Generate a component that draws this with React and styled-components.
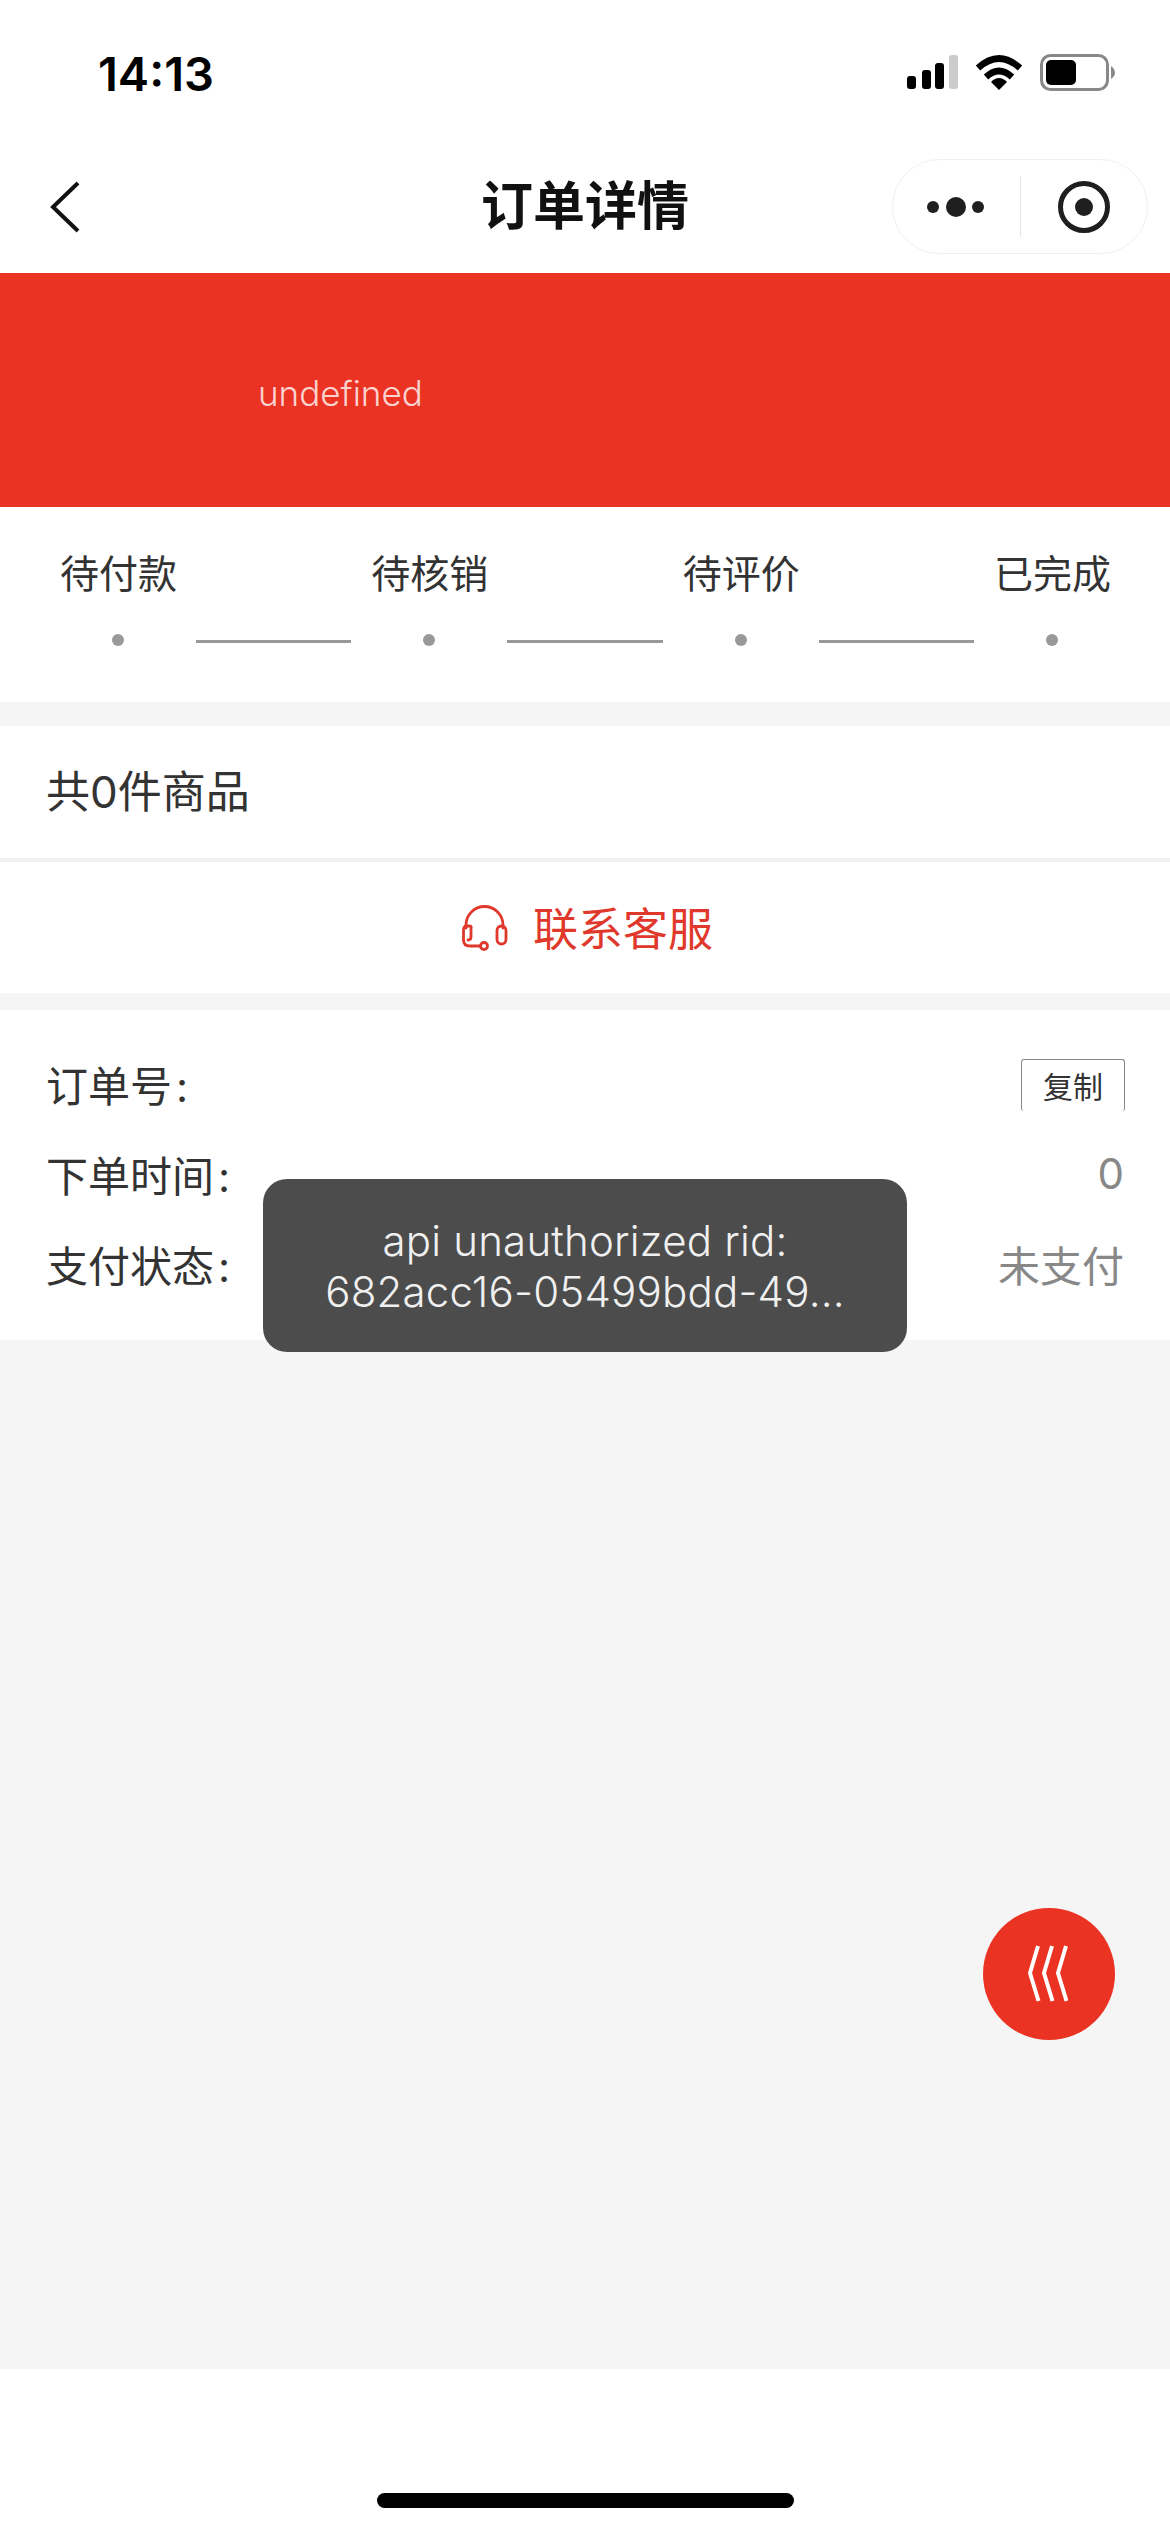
import React from "react";
import styled, { createGlobalStyle } from "styled-components";

const Global = createGlobalStyle`
  html, body { margin: 0; padding: 0; background: #fff; }
  body { font-family: Inter, "Noto Sans CJK SC", sans-serif; color: #333; }
  * { box-sizing: border-box; }
`;

const Page = styled.div`
  position: relative;
  width: 1170px;
  height: 2532px;
  overflow: hidden;
  display: flex;
  flex-direction: column;
  background: #fff;
`;

const StatusBar = styled.div`
  height: 148px;
  flex: none;
  display: flex;
  justify-content: space-between;
  align-items: flex-start;
  padding: 48px 0 0 98px;
`;

const Time = styled.div`
  font-size: 47px;
  line-height: 52px;
  font-weight: 600;
  color: #000;
`;

const StatusIcons = styled.svg`
  display: block;
  margin-top: 6px;
  margin-right: 54px;
`;

const NavBar = styled.div`
  height: 125px;
  flex: none;
  display: flex;
  align-items: center;
  justify-content: space-between;
  position: relative;
  padding: 0 22px 8px 50px;
`;

const BackIcon = styled.svg`
  display: block;
`;

const NavTitle = styled.div`
  position: absolute;
  left: 0;
  right: 0;
  top: 29px;
  text-align: center;
  font-size: 52px;
  line-height: 60px;
  font-weight: 700;
  color: #111;
`;

const Capsule = styled.div`
  width: 256px;
  height: 95px;
  border: 1px solid #f0f0f0;
  border-radius: 48px;
  display: flex;
  align-items: center;
  background: #fff;
`;

const CapsulePart = styled.div`
  flex: 1;
  height: 61px;
  display: flex;
  align-items: center;
  justify-content: center;
  & + & {
    border-left: 1px solid #e6e6e6;
  }
`;

const Banner = styled.div`
  height: 234px;
  flex: none;
  background: #eb3323;
  display: flex;
  align-items: center;
  padding: 6px 0 0 258px;
  color: rgba(255, 255, 255, 0.8);
  font-size: 35px;
  font-weight: 300;
`;

const Steps = styled.div`
  height: 195px;
  flex: none;
  background: #fff;
  padding-top: 42px;
`;

const StepLabels = styled.div`
  display: flex;
  justify-content: space-between;
  padding: 0 59px 0 60px;
  font-size: 39px;
  line-height: 50px;
  color: #333;
`;

const StepTrack = styled.div`
  display: flex;
  align-items: center;
  padding: 0 112px 0 112px;
  margin-top: 35px;
`;

const Dot = styled.span`
  width: 12px;
  height: 12px;
  flex: none;
  border-radius: 50%;
  background: #999;
`;

const Line = styled.span`
  flex: 1;
  height: 3px;
  margin: 2px 72px 0;
  background: #999;
`;

const Gap = styled.div`
  flex: none;
  height: ${(p) => p.$h}px;
  background: ${(p) => p.$c || "#f5f5f5"};
`;

const CountRow = styled.div`
  height: 132px;
  flex: none;
  display: flex;
  align-items: center;
  padding: 0 0 6px 46px;
  font-size: 44px;
  color: #333;
`;

const ContactRow = styled.div`
  height: 131px;
  flex: none;
  display: flex;
  align-items: center;
  justify-content: center;
  gap: 25px;
  padding-left: 5px;
  font-size: 45px;
  color: #e0392c;
`;

const ContactText = styled.span`
  margin-bottom: 3px;
`;

const Info = styled.div`
  flex: none;
  padding: 31px 46px 29px;
  background: #fff;
`;

const InfoRow = styled.div`
  height: 90px;
  display: flex;
  align-items: center;
  justify-content: space-between;
  font-size: 42px;
  color: #333;
  padding-bottom: 6px;
`;

const Colon = styled.span`
  margin-left: 4px;
`;

const Value = styled.span`
  color: #888;
`;

const CopyButton = styled.div`
  width: 104px;
  height: 52px;
  border: 1px solid #888;
  border-bottom: none;
  border-radius: 3px;
  display: flex;
  align-items: center;
  justify-content: center;
  font-size: 30px;
  color: #333;
  margin: 3px -1px 0 0;
`;

const Fill = styled.div`
  flex: 1;
  background: #f5f5f5;
`;

const BottomArea = styled.div`
  height: 163px;
  flex: none;
  background: #fff;
  display: flex;
  justify-content: center;
  padding-top: 124px;
`;

const HomeBar = styled.div`
  width: 417px;
  height: 15px;
  border-radius: 8px;
  background: #000;
`;

const Toast = styled.div`
  position: absolute;
  left: 263px;
  top: 1179px;
  width: 644px;
  height: 173px;
  border-radius: 24px;
  background: #4c4c4c;
  color: #f0f0f0;
  font-size: 42px;
  line-height: 51px;
  font-weight: 300;
  letter-spacing: 0.2px;
  text-align: center;
  display: flex;
  flex-direction: column;
  justify-content: center;
`;

const Fab = styled.div`
  position: absolute;
  left: 983px;
  top: 1908px;
  width: 132px;
  height: 132px;
  border-radius: 50%;
  background: #eb3323;
  display: flex;
  align-items: center;
  justify-content: center;
`;

const FabIcon = styled.svg`
  margin-right: 3px;
`;

const Signal = () => (
  <>
    <rect x="0" y="21" width="9" height="13" rx="3" fill="#000" />
    <rect x="15" y="15" width="9" height="19" rx="3" fill="#000" />
    <rect x="28" y="8" width="9" height="26" rx="3" fill="#000" />
    <rect x="42" y="0" width="9" height="34" rx="3" fill="#ccc" />
  </>
);

const Wifi = () => (
  <g fill="none" stroke="#000" strokeWidth="6.5">
    <path d="M71 13 Q92 -6 113 13" />
    <path d="M79 22 Q92 10 105 22" />
    <path d="M84 27 L92 35 L100 27 Q92 19 84 27 Z" fill="#000" stroke="none" />
  </g>
);

const Battery = () => (
  <>
    <rect x="134.5" y="0.5" width="66" height="34" rx="9" fill="none" stroke="#888" strokeWidth="3" />
    <rect x="139" y="5" width="30" height="25" rx="5" fill="#000" />
    <path d="M204 11 Q208 14 208 18 Q208 21 204 24 Z" fill="#888" />
  </>
);

const steps = ["待付款", "待核销", "待评价", "已完成"];

export default function App() {
  return (
    <Page>
      <Global />
      <StatusBar>
        <Time>14:13</Time>
        <StatusIcons width="209" height="37" viewBox="0 -1 209 37">
          <Signal />
          <Wifi />
          <Battery />
        </StatusIcons>
      </StatusBar>
      <NavBar>
        <BackIcon width="30" height="52" viewBox="0 0 30 52">
          <polyline points="28,2 3,26 28,50" fill="none" stroke="#111" strokeWidth="4" strokeLinejoin="miter" />
        </BackIcon>
        <NavTitle>订单详情</NavTitle>
        <Capsule>
          <CapsulePart>
            <svg width="64" height="24" viewBox="0 0 64 24">
              <circle cx="9" cy="12" r="6" fill="#1f1f1f" />
              <circle cx="32" cy="12" r="10" fill="#1f1f1f" />
              <circle cx="54" cy="12" r="6" fill="#1f1f1f" />
            </svg>
          </CapsulePart>
          <CapsulePart>
            <svg width="54" height="54" viewBox="0 0 54 54">
              <circle cx="27" cy="27" r="23.5" fill="none" stroke="#1f1f1f" strokeWidth="5" />
              <circle cx="27" cy="27" r="9" fill="#1f1f1f" />
            </svg>
          </CapsulePart>
        </Capsule>
      </NavBar>
      <Banner>undefined</Banner>
      <Steps>
        <StepLabels>
          {steps.map((s) => (
            <span key={s}>{s}</span>
          ))}
        </StepLabels>
        <StepTrack>
          {steps.map((s, i) => (
            <React.Fragment key={s}>
              <Dot />
              {i < steps.length - 1 && <Line />}
            </React.Fragment>
          ))}
        </StepTrack>
      </Steps>
      <Gap $h={24} />
      <CountRow>共0件商品</CountRow>
      <Gap $h={4} $c="#f0f0f0" />
      <ContactRow>
        <svg width="46" height="46" viewBox="0 0 46 46" fill="none" stroke="#e0392c" strokeWidth="2.8" strokeLinecap="round">
          <path d="M4 23 V20 A18.5 18.5 0 0 1 41 20 V23" />
          <path d="M9 22 Q9 21 7 21 H5 Q1.5 21 1.5 25 V35 Q1.5 41 8 41 H18" />
          <path d="M9 22 V32 Q9 35 6 35" />
          <rect x="35" y="21" width="9" height="18" rx="4.5" />
          <circle cx="22" cy="41" r="3.5" />
        </svg>
        <ContactText>联系客服</ContactText>
      </ContactRow>
      <Gap $h={17} />
      <Info>
        <InfoRow>
          <span>订单号<Colon>:</Colon></span>
          <CopyButton>复制</CopyButton>
        </InfoRow>
        <InfoRow>
          <span>下单时间<Colon>:</Colon></span>
          <Value>0</Value>
        </InfoRow>
        <InfoRow>
          <span>支付状态<Colon>:</Colon></span>
          <Value>未支付</Value>
        </InfoRow>
      </Info>
      <Fill />
      <BottomArea>
        <HomeBar />
      </BottomArea>
      <Toast>
        <div>api unauthorized rid:</div>
        <div>682acc16-05499bdd-49...</div>
      </Toast>
      <Fab>
        <FabIcon width="40" height="58" viewBox="0 0 40 58" fill="none" stroke="#fff" strokeWidth="4">
          <polyline points="10,1 2,28 10.5,56" />
          <polyline points="24,1 16,28 24.5,56" />
          <polyline points="38,1 30,28 38.5,56" />
        </FabIcon>
      </Fab>
    </Page>
  );
}
